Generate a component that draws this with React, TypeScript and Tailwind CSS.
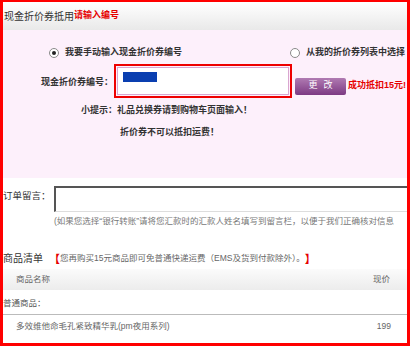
import React from 'react';

const font = { fontFamily: '"Liberation Sans", "Noto Sans CJK SC", sans-serif' };

const Radio = ({ checked }: { checked?: boolean }) => (
  <span className="inline-flex w-[10px] h-[10px] rounded-full border border-[#8a8a8a] bg-white items-center justify-center mr-[6px]">
    {checked && <span className="w-[4px] h-[4px] rounded-full bg-[#222]"></span>}
  </span>
);

const App = () => {
  return (
    <div className="w-[410px] h-[346px] overflow-hidden bg-[#ff0000] pt-[2px] pl-[3px] pr-[3px] pb-[3px]" style={font}>
      <div className="w-full h-full bg-white flex flex-col overflow-hidden">
        {/* header */}
        <div className="h-[28px] shrink-0 flex items-center px-[1px] bg-gradient-to-b from-white to-[#e9e9e9] whitespace-nowrap">
          <span className="text-[10px] text-[#333]">现金折价券抵用</span>
          <span className="text-[9px] font-bold text-[#e60000]">请输入编号</span>
        </div>

        {/* coupon panel */}
        <div className="h-[148px] shrink-0 bg-[#fdf0fb] flex flex-col whitespace-nowrap">
          <div className="flex items-center text-[9px] font-bold text-[#333] mt-[16px] h-[14px]">
            <div className="flex items-center ml-[46px]">
              <Radio checked />
              我要手动输入现金折价券编号
            </div>
            <div className="flex items-center ml-auto mr-[2px]">
              <Radio />
              从我的折价券列表中选择
            </div>
          </div>

          <div className="flex items-center mt-[4px] h-[34px]">
            <span className="w-[111px] text-right text-[9px] font-bold text-[#333] pr-[1px] mt-[4px]">现金折价券编号：</span>
            <div className="w-[178px] h-[34px] border-2 border-[#e00] p-[1px]">
              <div className="w-full h-full border border-[#d9a6d0] bg-white pl-[5px] pt-[4px]">
                <div className="w-[34px] h-[10px] bg-[#0a3fb0]"></div>
              </div>
            </div>
            <button className="ml-[3px] mt-[10px] w-[51px] h-[17px] rounded-[2px] bg-gradient-to-b from-[#b07ab2] to-[#7d3a83] text-white text-[9px] tracking-[6px] pl-[6px]">
              更改
            </button>
            <span className="ml-[2px] mt-[10px] text-[9px] font-bold text-[#e60000]">成功抵扣15元!</span>
          </div>

          <div className="text-[9px] font-bold text-[#333] pl-[78px] mt-[6px]">小提示：礼品兑换券请到购物车页面输入！</div>
          <div className="text-[9px] font-bold text-[#333] pl-[117px] mt-[8px]">折价券不可以抵扣运费！</div>
        </div>

        {/* message */}
        <div className="flex items-start mt-[8px]">
          <span className="text-[9.5px] text-[#333] mt-[3px] w-[51px] shrink-0 whitespace-nowrap">订单留言：</span>
          <div className="h-[26px] flex-1 border-t-2 border-l-2 border-[#555] border-b border-b-[#ddd] bg-white"></div>
        </div>
        <div className="pl-[51px] mt-[3px] text-[8.5px] text-[#777] whitespace-nowrap overflow-hidden">(如果您选择“银行转账”请将您汇款时的汇款人姓名填写到留言栏，以便于我们正确核对信息</div>

        {/* goods list */}
        <div className="flex items-center mt-[24px] whitespace-nowrap h-[14px]">
          <span className="text-[10px] text-[#333]">商品清单</span>
          <span className="ml-[6px] text-[11px] font-bold text-[#e60000]">【</span>
          <span className="text-[8.5px] text-[#666]">您再购买15元商品即可免普通快递运费（EMS及货到付款除外）。</span>
          <span className="text-[11px] font-bold text-[#e60000]">】</span>
        </div>

        <div className="h-[21px] mt-[3px] flex items-center justify-between bg-gradient-to-b from-[#fbfbfb] to-[#ececec] text-[8.5px] text-[#666] pl-[13px] pr-[17px]">
          <span>商品名称</span>
          <span>现价</span>
        </div>
        <div className="h-[25px] pt-[4px] flex items-center text-[8.5px] text-[#555] border-b border-[#bbb]">普通商品：</div>
        <div className="h-[23px] flex items-center justify-between text-[8.5px] text-[#666] pl-[13px] pr-[16px]">
          <span>多效维他命毛孔紧致精华乳(pm夜用系列)</span>
          <span>199</span>
        </div>
      </div>
    </div>
  );
};

export default App;
